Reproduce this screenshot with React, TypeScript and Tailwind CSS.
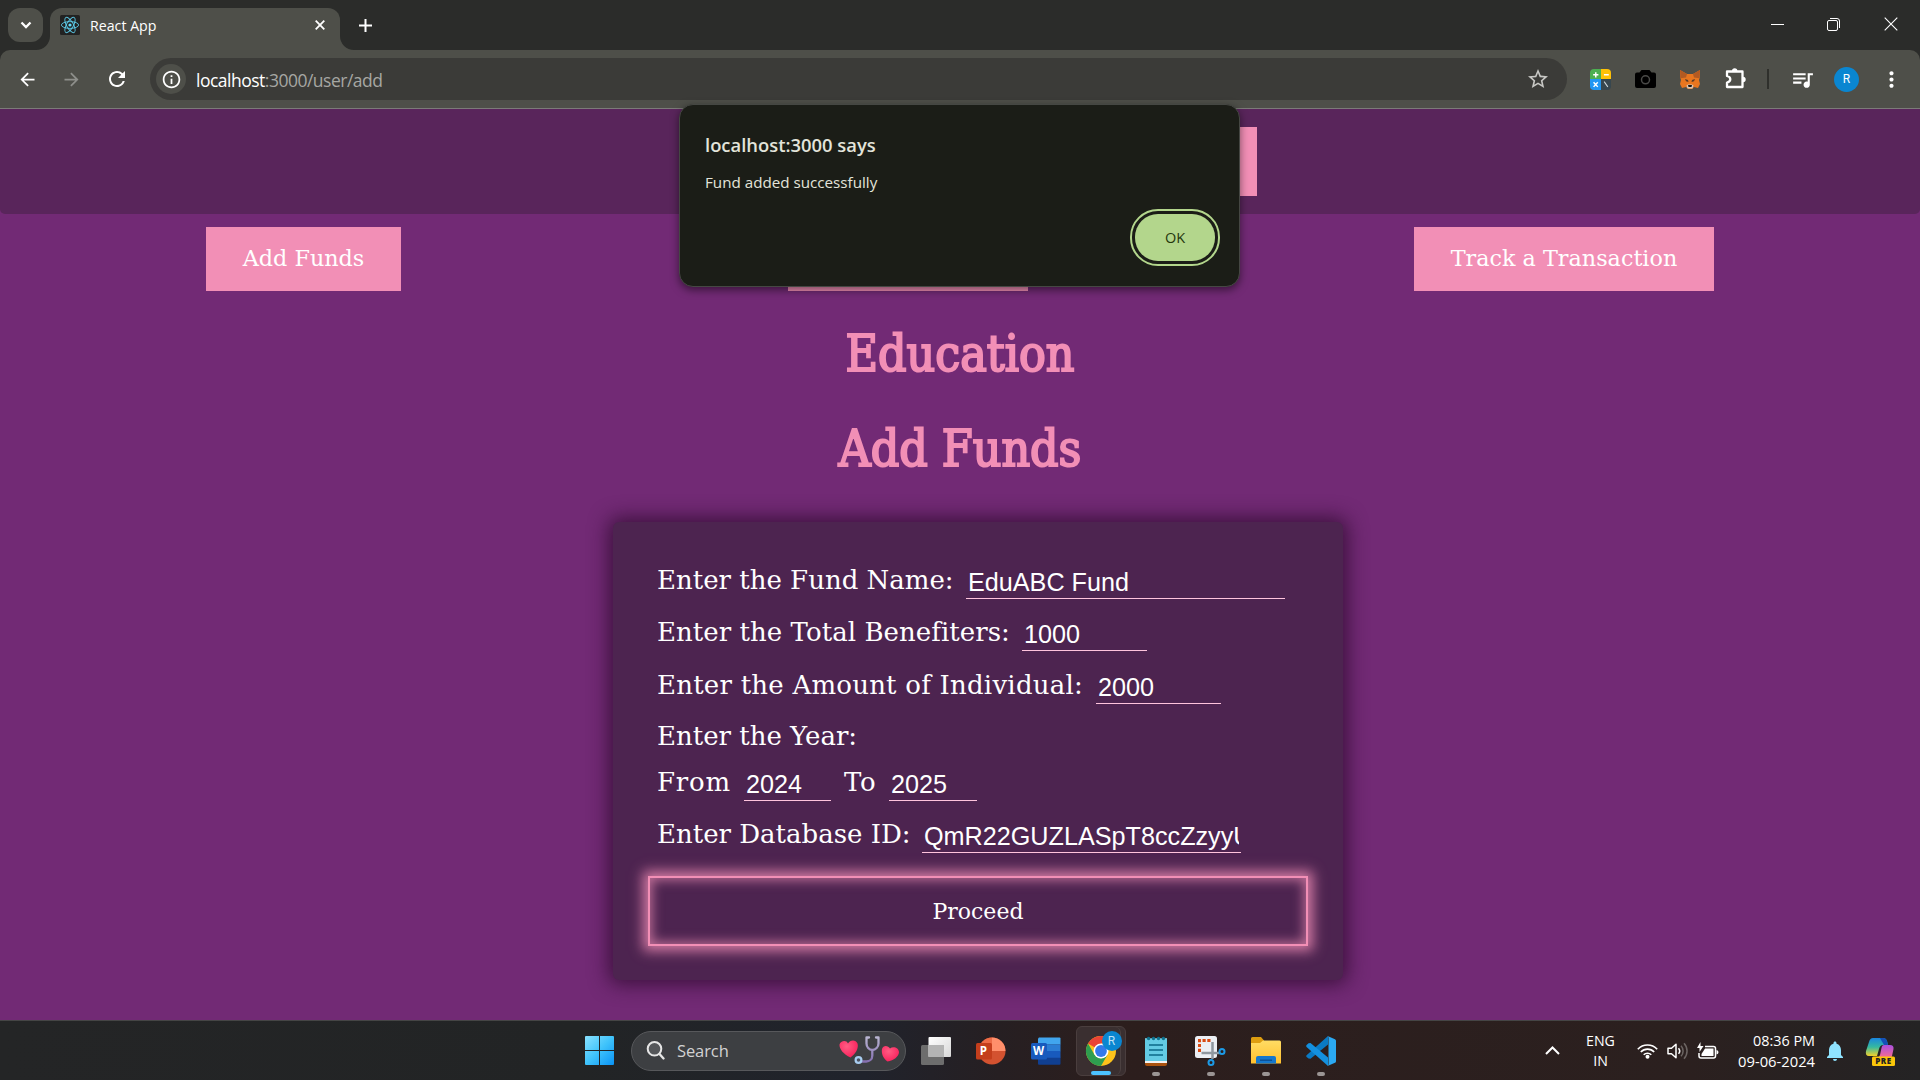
import type { ReactNode } from "react";
import {
  MdArrowBack,
  MdArrowForward,
  MdRefresh,
  MdInfoOutline,
  MdStarBorder,
  MdQueueMusic,
  MdMoreVert,
  MdNotifications,
} from "react-icons/md";

function ReactLogo() {
  return (
    <svg width="20" height="20" viewBox="0 0 20 20">
      <rect width="20" height="20" rx="1.5" fill="#222" />
      <g fill="none" stroke="#61dafb" strokeWidth="0.95" strokeOpacity="0.85">
        <ellipse cx="10" cy="10" rx="8.6" ry="3.4" />
        <ellipse cx="10" cy="10" rx="8.6" ry="3.4" transform="rotate(60 10 10)" />
        <ellipse cx="10" cy="10" rx="8.6" ry="3.4" transform="rotate(120 10 10)" />
      </g>
      <circle cx="10" cy="10" r="1.6" fill="#61dafb" />
    </svg>
  );
}

function TabStrip() {
  return (
    <div className="flex h-[50px] bg-[#2b2c2a] pt-2 pl-2">
      <div className="flex h-[34px] w-[35px] items-center justify-center rounded-[12px] bg-[#4e4f49]">
        <svg width="12" height="8" viewBox="0 0 12 8" fill="none" stroke="#fff" strokeWidth="2.3">
          <path d="M1.5 1.5L6 6l4.5-4.5" />
        </svg>
      </div>
      <div className="relative ml-[7px] flex w-[290px] items-center rounded-t-[12px] bg-[#4e4f49] pb-2 pl-[10px]">
        <svg className="absolute bottom-0 left-[-14px]" width="14" height="14" viewBox="0 0 14 14">
          <path d="M14 0v14H0A14 14 0 0 0 14 0z" fill="#4e4f49" />
        </svg>
        <svg className="absolute right-[-14px] bottom-0" width="14" height="14" viewBox="0 0 14 14">
          <path d="M0 0v14h14A14 14 0 0 1 0 0z" fill="#4e4f49" />
        </svg>
        <ReactLogo />
        <span className="ml-[10px] pt-px text-[14.2px] text-white">React App</span>
        <svg className="ml-auto mr-[15px]" width="10" height="10" viewBox="0 0 10 10" stroke="#fff" strokeWidth="1.8">
          <path d="M.7.7l8.6 8.6M9.3.7L.7 9.3" />
        </svg>
      </div>
      <svg className="ml-[19px] mt-[11px]" width="13" height="13" viewBox="0 0 13 13" stroke="#fff" strokeWidth="2">
        <path d="M6.5 0v13M0 6.5h13" />
      </svg>
      <div className="ml-auto mr-[22px] mt-[9px] flex h-[14px] items-center gap-[43px]">
        <svg className="-translate-x-px" width="13" height="13" viewBox="0 0 13 13" stroke="#fff" strokeWidth="1">
          <path d="M0 6.5h13" />
        </svg>
        <svg className="-translate-x-px" width="13" height="13" viewBox="0 0 13 13" fill="none" stroke="#fff" strokeWidth="1">
          <rect x=".5" y="2.5" width="10" height="10" rx="1.5" />
          <path d="M3 .5h7a2.5 2.5 0 0 1 2.5 2.5v7" />
        </svg>
        <svg width="14" height="14" viewBox="0 0 14 14" stroke="#fff" strokeWidth="1.1">
          <path d="M.7.7l12.6 12.6M13.3.7L.7 13.3" />
        </svg>
      </div>
    </div>
  );
}

function CalculatorIcon() {
  return (
    <div className="grid size-[21px] grid-cols-2 grid-rows-2 overflow-hidden rounded-[4px]">
      <svg viewBox="0 0 10 10" className="size-full bg-[#4caf50]" stroke="#fff" strokeWidth="1.4"><path d="M5.5 3v5M3 5.5h5" /></svg>
      <svg viewBox="0 0 10 10" className="size-full bg-[#ffc107]" stroke="#fff" strokeWidth="1.3"><path d="M2.8 5.5h4.6" /></svg>
      <svg viewBox="0 0 10 10" className="size-full bg-[#2196f3]" stroke="#fff" strokeWidth="1.4"><path d="M3.4 3l4 4.5M7.4 3l-4 4.5" /></svg>
      <svg viewBox="0 0 10 10" className="size-full bg-[#37474f]" stroke="#cfd8dc" strokeWidth="1"><path d="M3 2.5l3.5 5" /></svg>
    </div>
  );
}

function FoxIcon() {
  return (
    <svg width="20" height="19" viewBox="0 0 20 19">
      <path d="M0 0l7 4h6l7-4-.4 8-.6 2 1 4-2 4-4-1-2 2H8l-2-2-4 1-2-4 1-4-.6-2z" fill="#e8761f" />
      <path d="M0 0l7 4-1 3.5-5.5.8zM20 0l-7 4 1 3.5 5.5.8z" fill="#b35a22" />
      <path d="M5 9l3 1 .5 2-2.5-.8zM15 9l-3 1-.5 2 2.5-.8z" fill="#5a3a26" />
      <path d="M6.5 15.5l1.500-1h4l1.500 1-1 3h-5z" fill="#d8c8b8" />
      <path d="M8 15h4l-.5 2h-3z" fill="#161616" />
    </svg>
  );
}

function Toolbar() {
  return (
    <div className="bg-[#2b2c2a]">
      <div className="flex h-[58px] items-center rounded-t-[10px] bg-[#4e4f49] pl-[17px]">
        <MdArrowBack className="size-[21px] text-white" />
        <MdArrowForward className="ml-[23px] size-[21px] text-[#8e8f8b]" />
        <MdRefresh className="ml-[23px] size-[24px] text-white" />
        <div className="ml-[21px] flex h-[42px] w-[1417px] items-center rounded-full bg-[#3b3b38] pl-[6px]">
          <div className="flex size-[30px] items-center justify-center rounded-full bg-[#4e4f49]">
            <MdInfoOutline className="size-[21px] text-white" />
          </div>
          <span className="ml-[10px] pt-px text-[17.5px] leading-6 tracking-[-0.5px] text-white">
            localhost<span className="text-[#a6a7a3]">:3000/user/add</span>
          </span>
          <MdStarBorder className="ml-auto mr-[17px] size-[24px] text-[#c8c8c5]" />
        </div>
        <div className="ml-[23px]"><CalculatorIcon /></div>
        <svg className="ml-[24px]" width="21" height="18" viewBox="0 0 21 18">
          <path d="M6.5 0h8l2 2.5H19A2 2 0 0 1 21 4.5V16a2 2 0 0 1-2 2H2a2 2 0 0 1-2-2V4.5a2 2 0 0 1 2-2h2.5z" fill="#000" />
          <circle cx="10.5" cy="9.8" r="4" fill="none" stroke="#4a4a48" strokeWidth="1.5" />
        </svg>
        <div className="ml-[24px]"><FoxIcon /></div>
        <svg className="ml-[25px] -mt-[2px]" width="22" height="21" viewBox="0 0 22 21">
          <path d="M2 3.500H17.500V19H2v-4.400q3.300-.8 3.300-3.300T2 8z" fill="none" stroke="#fff" strokeWidth="2.300" strokeLinejoin="round" />
          <path d="M7 3a2.700 2.700 0 0 1 5.400 0zM18 8.800a2.700 2.700 0 0 1 0 5.400z" fill="#fff" />
        </svg>
        <div className="ml-[20px] h-5 w-[2px] bg-[#2f302c]" />
        <MdQueueMusic className="ml-[21px] size-[25px] text-white" />
        <div className="ml-[19px] flex size-[25px] items-center justify-center rounded-full bg-[#0a86d1] font-['Roboto'] text-[12px] text-white">R</div>
        <MdMoreVert className="ml-[20px] size-[25px] text-white" />
      </div>
      <div className="h-px bg-[#7b7b78]" />
    </div>
  );
}

function NavButton({ className, children }: { className: string; children?: string }) {
  return (
    <button className={`h-16 bg-[#f28fb6] text-[22.3px] text-white ${className}`}>{children}</button>
  );
}

function Field({ label, labelClass, inputClass, value }: { label: string; labelClass: string; inputClass: string; value: string }) {
  return (
    <>
      <label className={`shrink-0 pb-[2px] text-[26px] leading-[34px] whitespace-nowrap ${labelClass}`}>{label}</label>
      <input
        readOnly
        defaultValue={value}
        className={`h-[33px] shrink-0 border-b border-[#ffc4dd] bg-transparent px-[2px] pt-px font-['Liberation_Sans',sans-serif] text-[25.2px] leading-[30px] outline-none ${inputClass}`}
      />
    </>
  );
}

function FundForm() {
  return (
    <form className="mt-[38px] ml-[613px] h-[458px] w-[730px] rounded-[6px] bg-[#4d2450] pl-[44px] text-white shadow-[0_0_20px_4px_rgba(45,10,45,0.8)]">
      <div className="flex h-[77px] items-end">
        <Field label="Enter the Fund Name:" labelClass="w-[309px]" inputClass="w-[319px]" value="EduABC Fund" />
      </div>
      <div className="flex h-[52px] items-end">
        <Field label="Enter the Total Benefiters:" labelClass="w-[365px] tracking-[0.05px]" inputClass="w-[125px]" value="1000" />
      </div>
      <div className="flex h-[53px] items-end">
        <Field label="Enter the Amount of Individual:" labelClass="w-[439px] tracking-[0.23px]" inputClass="w-[125px]" value="2000" />
      </div>
      <div className="flex h-[52px] items-end">
        <span className="pb-[3px] text-[26px] leading-[34px]">Enter the Year:</span>
      </div>
      <div className="flex h-[45px] items-end">
        <Field label="From" labelClass="w-[87px] tracking-[0.8px]" inputClass="w-[87px]" value="2024" />
        <Field label="To" labelClass="ml-[13px] w-[45px] tracking-[0.8px]" inputClass="w-[88px]" value="2025" />
      </div>
      <div className="flex h-[52px] items-end">
        <Field label="Enter Database ID:" labelClass="w-[265px]" inputClass="w-[319px]" value="QmR22GUZLASpT8ccZzyyU" />
      </div>
      <button
        type="button"
        className="mt-[23px] -ml-[9px] flex h-[70px] w-[660px] items-center justify-center border-2 border-[#f28fb6] text-[22px] shadow-[0_0_12px_5px_#f28fb6cc,inset_0_0_12px_2px_#f28fb6b0]"
      >
        Proceed
      </button>
    </form>
  );
}

function AlertDialog() {
  return (
    <div className="absolute top-[104px] left-[679px] h-[183px] w-[561px] rounded-[14px] border border-[#454743] bg-[#1b1d17] px-[25px] pt-[26px] font-['Open_Sans','Noto_Sans',sans-serif] text-[#e3e4da] shadow-[0_3px_8px_rgba(0,0,0,0.5)]">
      <h2 className="text-[18.4px] leading-7 font-semibold">localhost:3000 says</h2>
      <p className="mt-[13px] text-[15.2px] leading-5">Fund added successfully</p>
      <button className="absolute right-[24px] bottom-[25px] h-[47px] w-[80px] rounded-[23px] bg-[#b3d68c] text-[14.5px] font-medium text-[#25370d] outline-2 outline-offset-[3px] outline-[#b3d68c]">
        OK
      </button>
    </div>
  );
}

function TaskCell({ running, children }: { running?: boolean; children: ReactNode }) {
  return (
    <div className="relative flex h-full w-[55px] items-center justify-center">
      {children}
      {running && <div className="absolute bottom-1 h-1 w-2 rounded-full bg-[#9b9594]" />}
    </div>
  );
}

function WindowsLogo() {
  return (
    <svg width="29" height="29" viewBox="0 0 29 29">
      <defs>
        <linearGradient id="win" x1="0" y1="0" x2="1" y2="1">
          <stop offset="0" stopColor="#8ae2ff" />
          <stop offset=".5" stopColor="#3fc3fb" />
          <stop offset="1" stopColor="#0a93f5" />
        </linearGradient>
      </defs>
      <path d="M1 0h13v14H0V1a1 1 0 0 1 1-1zM15 0h13a1 1 0 0 1 1 1v13H15zM0 15h14v14H1a1 1 0 0 1-1-1zM15 15h14v13a1 1 0 0 1-1 1H15z" fill="url(#win)" />
    </svg>
  );
}

function HeartsArt() {
  return (
    <svg width="60" height="30" viewBox="0 0 60 30">
      <defs>
        <linearGradient id="steth" x1="0" y1="0" x2="0" y2="1">
          <stop offset="0" stopColor="#b9b5d2" />
          <stop offset="1" stopColor="#8570b0" />
        </linearGradient>
        <radialGradient id="heart" cx=".4" cy=".35" r=".7">
          <stop offset="0" stopColor="#ff5c83" />
          <stop offset="1" stopColor="#f81f5b" />
        </radialGradient>
      </defs>
      <path d="M9 7.5C7.5 3.5 1.5 4.5.5 8.5 0 12.5 4.5 18.5 11.5 21.5 16.5 18 20 12 18.5 7.5 17 3.3 11 3.5 9 7.5z" fill="url(#heart)" />
      <path d="M51 12.5C49 9 44 9 43 13c-.8 4 1 9.5 5.5 12.5C55 24.5 59.5 20.5 60 16.5 60 11.5 54 10 51 12.5z" fill="url(#heart)" />
      <path d="M30 1.5h-2.5v6c0 3.500 2.500 6.500 5.800 6.500S39.500 11 39.500 7.500v-6H37M33.300 14v5.500c0 4-3 6-6 6H22" fill="none" stroke="url(#steth)" strokeWidth="2.300" strokeLinecap="round" strokeLinejoin="round" />
      <circle cx="19.5" cy="24" r="2.9" fill="#4e5260" stroke="#a8cdf0" strokeWidth="2.2" />
    </svg>
  );
}

function ChromeIcon() {
  return (
    <svg width="42" height="42" viewBox="0 0 42 42" className="overflow-visible">
      <circle cx="21" cy="21" r="15" fill="#fcc21b" />
      <path d="M21 21L8 13.5A15 15 0 0 1 34 13.5H21z" fill="#ea4335" />
      <path d="M8 13.5L14.5 24.75 21 28.5 27.5 24.75 21 36A15 15 0 0 1 8 13.5z" fill="#2e9e4f" />
      <circle cx="21" cy="21" r="7.5" fill="#fff" />
      <circle cx="21" cy="21" r="5.9" fill="#3379ea" />
    </svg>
  );
}

function Taskbar() {
  return (
    <div className="flex h-[60px] items-center border-t border-[#454545] bg-[linear-gradient(90deg,#242526_0%,#222425_30%,#20232c_45%,#261f22_52%,#2c1e1d_58%,#2b201f_88%,#242324_100%)] pl-[572px]">
      <TaskCell><WindowsLogo /></TaskCell>
      <div className="ml-[4px] flex h-10 w-[275px] shrink-0 items-center rounded-full border border-[#57585b] bg-[#3d3f42] pl-[14px]">
        <svg width="19" height="19" viewBox="0 0 19 19" fill="none" stroke="#e6e6e6" strokeWidth="2" strokeLinecap="round">
          <circle cx="8.5" cy="7.8" r="6.8" fill="#55575a" />
          <path d="M13.5 13l4 4.5" strokeWidth="2.3" />
        </svg>
        <span className="ml-[12px] pt-px text-[16.5px] tracking-[-0.1px] text-[#d2d2d2]">Search</span>
        <div className="ml-auto mr-[6px]"><HeartsArt /></div>
      </div>
      <div className="ml-[2px] flex h-full">
        <TaskCell>
          <svg width="30" height="28" viewBox="0 0 30 28">
            <defs>
              <linearGradient id="tv" x1="0" y1="0" x2="1" y2="1"><stop offset="0" stopColor="#fff" /><stop offset="1" stopColor="#d8d8d8" /></linearGradient>
            </defs>
            <rect y="8" width="23" height="20" rx="1.5" fill="#6d6d6d" />
            <rect x="7.5" width="22.5" height="20" rx="1" fill="url(#tv)" />
            <path d="M7.5 8H23v12H7.5z" fill="#b4b4b4" />
          </svg>
        </TaskCell>
        <TaskCell>
          <svg width="30" height="28" viewBox="0 0 30 28">
            <circle cx="16" cy="14" r="13.5" fill="#d35230" />
            <path d="M16 .5A13.5 13.5 0 0 0 2.5 14H16z" fill="#ed6c47" />
            <path d="M16 .5A13.5 13.5 0 0 1 29.5 14H16z" fill="#ff8f6b" />
            <rect y="6" width="16" height="16.5" rx="1.5" fill="#c43e1c" />
            <text x="3.7" y="18.3" fontSize="11.5" fontWeight="700" fill="#fff" className="font-['Open_Sans']">P</text>
          </svg>
        </TaskCell>
        <TaskCell>
          <svg width="30" height="28" viewBox="0 0 30 28">
            <path d="M8 .5h20.5A1 1 0 0 1 29.5 1.5V7.5H7V1.5z" fill="#41a5ee" />
            <path d="M7 7.3h22.5v7H7z" fill="#2b7cd3" />
            <path d="M7 14h22.5v7H7z" fill="#185abd" />
            <path d="M7 20.8h22.5v6a1 1 0 0 1-1 1H8a1 1 0 0 1-1-1z" fill="#103f91" />
            <rect y="6" width="16" height="16.5" rx="1.5" fill="#185abd" />
            <text x="2" y="18.3" fontSize="11.5" fontWeight="700" fill="#fff" className="font-['Open_Sans']">W</text>
          </svg>
        </TaskCell>
        <TaskCell>
          <div className="relative flex h-[50px] w-[50px] items-center justify-center rounded-[6px] border border-[#4a3e3e] bg-[#3a2f30]">
            <div className="absolute right-[4px] h-full w-2 rounded-r-[6px] border-r border-[#4c4141]" />
            <ChromeIcon />
            <div className="absolute top-[4px] right-[3px] flex size-5 items-center justify-center rounded-full bg-[#0a86d1] font-['Roboto'] text-[12px] leading-none text-[#bfe2f7]">R</div>
            <div className="absolute bottom-0 h-1 w-5 rounded-full bg-[#4cc2ff]" />
          </div>
        </TaskCell>
        <TaskCell running>
          <svg width="22" height="30" viewBox="0 0 22 30">
            <path d="M0 26h22v2a2 2 0 0 1-2 2H2a2 2 0 0 1-2-2z" fill="#a9520f" />
            <path d="M0 2.5h22V27H0z" fill="#f2f2f2" />
            <path d="M0 2.5h22V25H0z" fill="#63cbe4" />
            <path d="M4 9h14M4 14h14M4 19h14" stroke="#0b6a88" strokeWidth="1.7" />
            <g fill="#0e7390"><circle cx="3.6" cy="2.5" r="1.7" /><circle cx="8.5" cy="2.5" r="1.7" /><circle cx="13.5" cy="2.5" r="1.7" /><circle cx="18.4" cy="2.5" r="1.7" /></g>
          </svg>
        </TaskCell>
        <TaskCell running>
          <svg width="31" height="30" viewBox="0 0 31 30" fill="none">
            <rect width="22" height="22" rx="2.5" fill="#eceff4" />
            <path d="M15.5 4.5h-11v12" stroke="#d94b12" strokeWidth="3" strokeDasharray="3.2 1.6" />
            <path d="M17.5 6v17M6.5 17h18" stroke="#8f979f" strokeWidth="2.5" />
            <circle cx="27" cy="15.5" r="2.5" stroke="#1c9ae6" strokeWidth="2" />
            <circle cx="16" cy="26.5" r="2.5" stroke="#1c9ae6" strokeWidth="2" />
          </svg>
        </TaskCell>
        <TaskCell running>
          <svg width="30" height="27" viewBox="0 0 30 27">
            <defs>
              <linearGradient id="fold" x1="0" y1="0" x2="0" y2="1"><stop offset="0" stopColor="#ffdc64" /><stop offset="1" stopColor="#ffc02e" /></linearGradient>
            </defs>
            <path d="M0 1.5A1.5 1.5 0 0 1 1.5 0H10l3 3.5V8H0z" fill="#dd9d10" />
            <path d="M12 3.5h16.5A1.5 1.5 0 0 1 30 5v21.5H0V6h9z" fill="url(#fold)" />
            <path d="M5 26.5V21a2 2 0 0 1 2-2h16a2 2 0 0 1 2 2v5.5z" fill="#1577cc" />
            <path d="M9 23.2h12" stroke="#0a4f94" strokeWidth="1.4" />
          </svg>
        </TaskCell>
        <TaskCell running>
          <svg width="30" height="30" viewBox="0 0 30 30">
            <path d="M22 0v8.5L4.5 22.8 2.500 22.500.3 20.800V19.500z" fill="#0a7ac4" />
            <path d="M.3 9.200L2.500 7.200l2-.1L22 21.500V30L.3 10.800z" fill="#1490df" />
            <path d="M21.500 0L29 3.200q1 .5 1 1.600v20.400q0 1.100-1 1.600L21.500 30q1-.6 1-2V2q0-1.400-1-2z" fill="#2ba9f2" />
          </svg>
        </TaskCell>
      </div>
      <svg className="ml-[197px] shrink-0" width="15" height="9" viewBox="0 0 15 9" fill="none" stroke="#fff" strokeWidth="2">
        <path d="M1 8l6.5-6.5L14 8" />
      </svg>
      <div className="ml-[23px] w-[35px] text-center text-[14.2px] leading-5 text-white"><div>ENG</div><div>IN</div></div>
      <svg className="ml-[19px] shrink-0" width="21" height="16" viewBox="0 0 21 16" fill="none" stroke="#fff" strokeWidth="1.6">
        <path d="M.8 6.2a13.3 13.3 0 0 1 19.4 0M3.8 9a9.2 9.2 0 0 1 13.4 0M6.7 11.8a5.3 5.3 0 0 1 7.6 0" />
        <circle cx="10.5" cy="13.8" r="2" fill="#fff" stroke="none" />
      </svg>
      <svg className="ml-[9px] shrink-0" width="22" height="18" viewBox="0 0 22 18" fill="none" stroke="#fff" strokeWidth="1.5">
        <path d="M1 6.2h3.5L9 2.2v13.6l-4.5-4H1z" strokeLinejoin="round" />
        <path d="M11.5 6.2a4.2 4.2 0 0 1 0 5.6" />
        <path d="M14 3.8a7.5 7.5 0 0 1 0 10.4M17 1.2a11.5 11.5 0 0 1 0 15.6" stroke="#6b6462" />
      </svg>
      <svg className="ml-[8px] shrink-0" width="22" height="18" viewBox="0 0 22 18">
        <path d="M8 4.5h8.500a2 2 0 0 1 2 2v7.500a2 2 0 0 1-2 2H4a2 2 0 0 1-2-2V11" fill="none" stroke="#fff" strokeWidth="1.500" />
        <path d="M8 6.500h8.500v7.500H4.500v-2z" fill="#fff" />
        <path d="M19.500 8q2 .2 2 2.200t-2 2.200zM3.500 0v4h3L2.500 10V6H0z" fill="#fff" />
      </svg>
      <div className="ml-auto text-right text-white">
        <div className="text-[14.4px] leading-5">08:36 PM</div>
        <div className="text-[14.75px] leading-5">09-06-2024</div>
      </div>
      <MdNotifications className="ml-[8px] mr-[18px] size-[24px] shrink-0 text-[#8fe3ff]" />
      <svg className="mr-[25px] mt-[2px] shrink-0" width="30" height="30" viewBox="0 0 30 30">
        <defs>
          <linearGradient id="cp1" x1="0" y1="0" x2="0" y2="1"><stop offset="0" stopColor="#1a86e0" /><stop offset=".5" stopColor="#35b9a0" /><stop offset="1" stopColor="#f3d12b" /></linearGradient>
          <linearGradient id="cp2" x1="0" y1="0" x2="0" y2="1"><stop offset="0" stopColor="#a94fe0" /><stop offset="1" stopColor="#ff6f87" /></linearGradient>
        </defs>
        <path d="M8 1h10q3 0 4 3l1 4h-5q-3 0-4 4l-2 7H4q-4 0-3-5L4 5q1-4 4-4z" fill="url(#cp1)" />
        <path d="M15 1h3q3 0 4 3l1 4h-4z" fill="#1450b8" />
        <path d="M19 8h6q4 0 3.5 4L27 19q-.5 3-4 3H11q3-1 4-4l1.5-7q.5-3 2.5-3z" fill="url(#cp2)" />
        <rect x="7" y="19.5" width="23" height="9.5" rx="1.5" fill="#fbc60a" />
        <text x="10.2" y="27.2" fontSize="8" fontWeight="800" letterSpacing=".6" fill="#222" className="font-['Open_Sans']">PRE</text>
      </svg>
    </div>
  );
}

export default function App() {
  return (
    <div className="relative flex h-[1080px] w-[1920px] flex-col overflow-hidden bg-[#722a75] font-['Open_Sans','Noto_Sans',sans-serif]">
      <TabStrip />
      <Toolbar />
      <main className="flex-1 font-['DejaVu_Serif',serif]">
        <header className="flex h-[105px] justify-end rounded-b-[5px] bg-[#59255b] pt-[18px] pr-[663px]">
          <div className="h-[69px] w-[520px] bg-[#f28fb6]" />
        </header>
        <nav className="mt-[13px] flex justify-between px-[206px]">
          <NavButton className="w-[195px]">Add Funds</NavButton>
          <NavButton className="w-[240px]" />
          <NavButton className="w-[300px]">Track a Transaction</NavButton>
        </nav>
        <div className="mt-[28px] text-center font-['DejaVu_Serif_Condensed','DejaVu_Serif',serif] text-[49.5px] leading-[70px] text-[#f28fb6] [-webkit-text-stroke:2px_#f28fb6]">
          <h1>Education</h1>
          <h1 className="mt-[25px]">Add Funds</h1>
        </div>
        <FundForm />
      </main>
      <Taskbar />
      <AlertDialog />
    </div>
  );
}
